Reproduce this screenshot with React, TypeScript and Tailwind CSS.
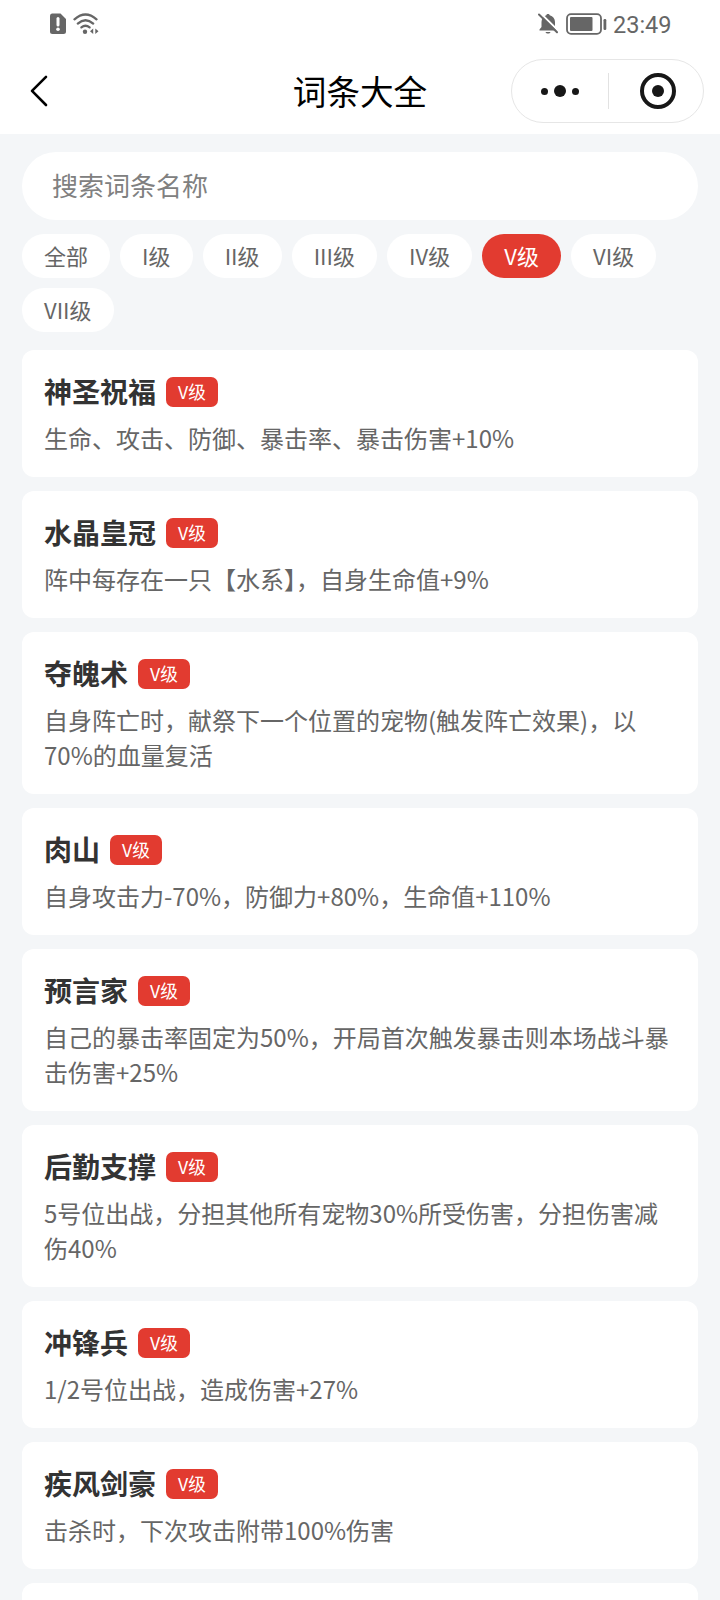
import React from "react";

const levels = ["全部", "I级", "II级", "III级", "IV级", "V级", "VI级", "VII级"];

type Entry = { name: string; level: string; desc: string };

const entries: Entry[] = [
  { name: "神圣祝福", level: "V级", desc: "生命、攻击、防御、暴击率、暴击伤害+10%" },
  { name: "水晶皇冠", level: "V级", desc: "阵中每存在一只【水系】，自身生命值+9%" },
  { name: "夺魄术", level: "V级", desc: "自身阵亡时，献祭下一个位置的宠物(触发阵亡效果)，以70%的血量复活" },
  { name: "肉山", level: "V级", desc: "自身攻击力-70%，防御力+80%，生命值+110%" },
  { name: "预言家", level: "V级", desc: "自己的暴击率固定为50%，开局首次触发暴击则本场战斗暴击伤害+25%" },
  { name: "后勤支撑", level: "V级", desc: "5号位出战，分担其他所有宠物30%所受伤害，分担伤害减伤40%" },
  { name: "冲锋兵", level: "V级", desc: "1/2号位出战，造成伤害+27%" },
  { name: "疾风剑豪", level: "V级", desc: "击杀时，下次攻击附带100%伤害" },
];

function StatusBar() {
  return (
    <div className="flex h-12 items-center justify-between pr-[49px] pl-[49px] text-[#666666]">
      <div className="flex items-center gap-[6px] pb-px">
        <svg width="18" height="22" viewBox="0 0 18 22">
          <path d="M3 .5h8.500L17 6v12.500a2.500 2.500 0 0 1-2.500 2.500H3.500A2.500 2.500 0 0 1 1 18.500V3A2.500 2.500 0 0 1 3 .5z" fill="currentColor" />
          <path d="M9 5.500v6.500" stroke="#fff" strokeWidth="3" strokeLinecap="round" />
          <circle cx="9" cy="16.300" r="1.800" fill="#fff" />
        </svg>
        <svg width="27" height="22" viewBox="0 0 27 22">
          <g fill="none" stroke="currentColor" strokeWidth="2.300" strokeLinecap="round">
            <path d="M1.500 6.300Q12.500-3.300 23.500 6.300" />
            <path d="M4.800 10.600Q12.500 3.800 20.200 10.600" />
            <path d="M8.400 14.400Q12.500 11 16.600 14.400" />
          </g>
          <circle cx="12" cy="18.800" r="2.200" fill="currentColor" />
          <path d="M17 18.300l3.200-2.700v5.400zM25.500 18.300l-3.200-2.700v5.400z" fill="currentColor" />
        </svg>
      </div>
      <div className="flex items-center">
        <svg width="21" height="22" viewBox="0 0 21 22" className="mr-[7px]">
          <path d="M10 1c.9 0 1.500.5 1.700 1.300C15 3.200 17 5.800 17 9v5l2 2.500v1H1.500v-1L3.500 14V9c0-3.200 2-5.800 4.800-6.700C8.500 1.500 9.100 1 10 1z" fill="currentColor" />
          <path d="M7.500 19h5c-.4 1-1.300 1.600-2.500 1.600S7.900 20 7.500 19z" fill="currentColor" />
          <path d="M2-.3l19 18.800" stroke="#fff" strokeWidth="2" />
          <path d="M1 1.500l18 17.700" stroke="currentColor" strokeWidth="2" strokeLinecap="round" />
        </svg>
        <svg width="41" height="22" viewBox="0 0 41 22" className="mr-[6px]">
          <rect x="1" y="1.200" width="34" height="19.600" rx="4" fill="none" stroke="currentColor" strokeWidth="1.800" />
          <rect x="4" y="4" width="22.500" height="14" rx="1" fill="currentColor" />
          <rect x="37.500" y="6" width="2.800" height="11" rx="1.200" fill="currentColor" />
        </svg>
        <span className="w-[58px] pt-px font-[Roboto,sans-serif] text-[23.5px] leading-[46px] whitespace-nowrap">23:49</span>
      </div>
    </div>
  );
}

function NavBar() {
  return (
    <div className="grid h-[86px] grid-cols-[1fr_auto_1fr] items-center">
      <svg width="20" height="34" viewBox="0 0 20 34" className="ml-[29px]">
        <path d="M17 2.800L3 16.800L17 31" fill="none" stroke="#000" strokeWidth="2.600" strokeLinecap="round" strokeLinejoin="round" />
      </svg>
      <h1 className="text-[33.6px] leading-[44px] font-normal text-black">词条大全</h1>
      <div className="mr-4 flex h-16 w-[193px] items-center justify-self-end rounded-full border border-[#e6e6e6]">
        <div className="flex w-24 items-center justify-center gap-[6px]">
          <i className="size-[7px] rounded-full bg-[#171717]" />
          <i className="size-3 rounded-full bg-[#171717]" />
          <i className="size-[7px] rounded-full bg-[#171717]" />
        </div>
        <div className="h-9 w-px bg-[#e2e2e2]" />
        <div className="flex flex-1 justify-center pl-[3px]">
          <div className="flex size-[36px] items-center justify-center rounded-full border-[4.5px] border-[#171717]">
            <i className="size-[12px] rounded-full bg-[#171717]" />
          </div>
        </div>
      </div>
    </div>
  );
}

function EntryCard({ name, level, desc }: Entry) {
  return (
    <li className="rounded-[12px] bg-white px-[22px] pt-[22px] pb-[22px]">
      <div className="flex h-10 items-center gap-[10px]">
        <h2 className="pb-[2px] text-[28px] leading-[38px] font-bold text-[#333333]">{name}</h2>
        <span className="flex h-[30px] w-[52px] items-center justify-center rounded-[7px] bg-[#e23b30] text-[17.7px] leading-none text-white">
          {level}
        </span>
      </div>
      <p className="mt-2 text-[24px] leading-[35px] text-[#666666]">{desc}</p>
    </li>
  );
}

export default function App() {
  return (
    <div className="flex h-[1600px] w-[720px] flex-col overflow-hidden bg-[#f4f6f8] font-['Noto_Sans_CJK_SC',sans-serif]">
      <header className="shrink-0 bg-white">
        <StatusBar />
        <NavBar />
      </header>
      <main className="flex flex-col px-[22px] pt-[18px]">
        <input
          type="text"
          placeholder="搜索词条名称"
          className="h-[68px] w-full shrink-0 rounded-full bg-white px-[30px] pb-[3px] text-[26px] text-[#333333] outline-none placeholder:text-[#808080]"
        />
        <div className="mt-[14px] flex flex-wrap gap-x-[10.1px] gap-y-[10px]">
          {levels.map((l) => (
            <button
              key={l}
              className={
                l === "V级"
                  ? "h-11 rounded-full bg-[#e23b30] px-[22px] pb-[2px] text-[22px] leading-[42px] text-white"
                  : "h-11 rounded-full bg-white px-[22px] pb-[2px] text-[22px] leading-[42px] text-[#666666]"
              }
            >
              {l}
            </button>
          ))}
        </div>
        <ul className="mt-[18px] flex flex-col gap-[14px]">
          {entries.map((e) => (
            <EntryCard key={e.name} {...e} />
          ))}
          <li className="h-[127px] rounded-[12px] bg-white" />
        </ul>
      </main>
    </div>
  );
}
